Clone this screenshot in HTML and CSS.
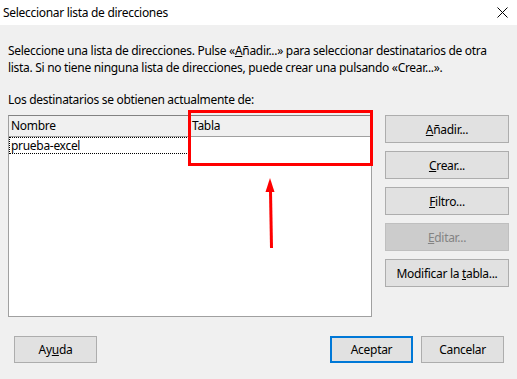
FILE: index.html
```html
<!DOCTYPE html>
<html lang="es">
<head>
<meta charset="utf-8">
<title>Seleccionar lista de direcciones</title>
<link rel="stylesheet" href="styles.css">
</head>
<body>
<div class="dialog">
  <div class="titlebar">
    <span class="title">Seleccionar lista de direcciones</span>
    <svg class="close" width="11" height="11" viewBox="0 0 11 11"><path d="M0.5 0.5 L10.5 10.5 M10.5 0.5 L0.5 10.5" stroke="#000" stroke-width="1" fill="none"/></svg>
  </div>
  <div class="content">
    <p class="intro">Seleccione una lista de direcciones. Pulse «<u>A</u>ñadir...» para seleccionar destinatarios de otra<br>lista. Si no tiene ninguna lista de direcciones, puede crear una pulsando «Crear...».</p>
    <p class="label">Los destinatarios se obtienen actualmente de:</p>
    <div class="main">
      <div class="listbox">
        <div class="header">
          <div class="col col-name">Nombre</div>
          <div class="col col-table">Tabla</div>
        </div>
        <div class="row">
          <div class="cell cell-name">prueba-excel</div>
          <div class="cell cell-table"></div>
        </div>
      </div>
      <div class="side">
        <button class="btn"><u>A</u>ñadir...</button>
        <button class="btn"><u>C</u>rear...</button>
        <button class="btn"><u>F</u>iltro...</button>
        <button class="btn disabled"><u>E</u>ditar...</button>
        <button class="btn">Modificar la <u>t</u>abla...</button>
      </div>
    </div>
    <div class="footer">
      <button class="btn small">Ay<u>u</u>da</button>
      <div class="spacer"></div>
      <button class="btn small default">Aceptar</button>
      <button class="btn small">Cancelar</button>
    </div>
  </div>
  <div class="highlight"></div>
  <svg class="arrow" width="20" height="80" viewBox="0 0 20 80">
    <path d="M8.5 14 L9.5 71" stroke="#ff0000" stroke-width="3" fill="none"/>
    <path d="M8 1 L3.5 15 L12.5 15 Z" fill="#ff0000"/>
  </svg>
</div>
</body>
</html>
```

FILE: styles.css
```css
html, body {
  margin: 0;
  padding: 0;
}
body {
  width: 517px;
  height: 379px;
  overflow: hidden;
  background: #f0f0f0;
  font-family: "Noto Sans", "Open Sans", sans-serif;
  font-size: 12px;
  letter-spacing: -0.3px;
  color: #000;
}
.dialog {
  position: relative;
  width: 517px;
  height: 379px;
}
.titlebar {
  height: 25px;
  background: #ffffff;
  display: flex;
  align-items: center;
  justify-content: space-between;
  padding: 0 9px 0 3px;
}
.title {
  line-height: 25px;
}
.close {
  display: block;
  margin-top: -1px;
}
.content {
  padding: 0 8px;
}
.intro {
  margin: 17px 0 0 0;
  line-height: 17px;
  white-space: nowrap;
}
.label {
  margin: 15px 0 0 0;
  line-height: 17px;
}
.main {
  display: flex;
  margin-top: 7px;
  gap: 13px;
}
.listbox {
  width: 362px;
  height: 200px;
  background: #ffffff;
  border: 1px solid #a0a0a0;
  border-top-color: #828282;
}
.header {
  display: flex;
  height: 20px;
  background: #f0f0f0;
  border-bottom: 1px solid #a0a0a0;
}
.col {
  line-height: 20px;
  padding-left: 2px;
}
.col-name {
  width: 178px;
  border-right: 1px solid #d5d5d5;
}
.col-table {
  flex: 1;
}
.row {
  display: flex;
  height: 17px;
}
.cell {
  line-height: 15px;
}
.cell-name {
  width: 177px;
  border: 1px dotted #000;
  padding-left: 1px;
}
.side {
  display: flex;
  flex-direction: column;
  gap: 8px;
}
.btn {
  font-family: inherit;
  font-size: 12px;
  letter-spacing: inherit;
  color: #000;
  background: #e1e1e1;
  border: 1px solid #adadad;
  width: 124px;
  height: 28px;
  padding: 0;
  margin: 0;
  text-align: center;
}
.btn.disabled {
  background: #cccccc;
  border-color: #bfbfbf;
  color: #838383;
}
.footer {
  display: flex;
  align-items: center;
  margin-top: 19px;
  padding: 0 5px 0 6px;
  gap: 8px;
}
.spacer {
  flex: 1;
}
.btn.small {
  width: 83px;
  height: 27px;
}
.btn.default {
  border: 2px solid #0078d7;
}
.highlight {
  position: absolute;
  left: 188px;
  top: 110px;
  width: 179px;
  height: 50px;
  border: 3px solid #ff0000;
}
.arrow {
  position: absolute;
  left: 262px;
  top: 177px;
}
```
